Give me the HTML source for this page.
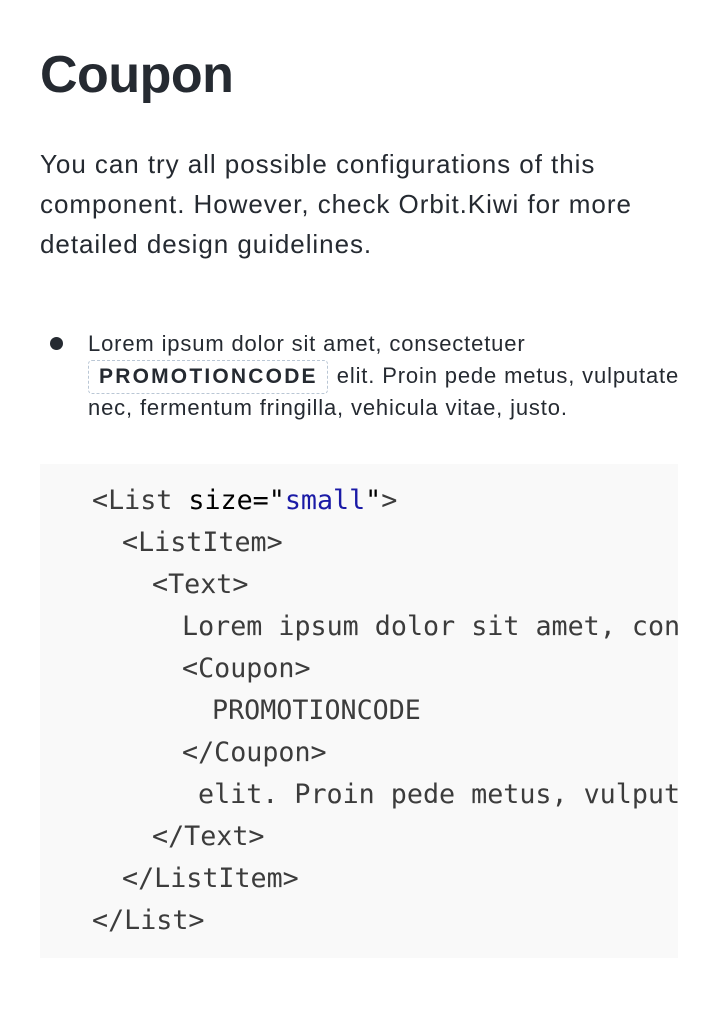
<!DOCTYPE html>
<html><head><style>
body{margin:0;background:#fff;width:718px;height:1026px;position:relative;font-family:"Liberation Sans",sans-serif;color:#252a31;overflow:hidden}
h1{position:absolute;left:40px;top:43px;margin:0;font-size:52px;font-weight:bold;line-height:64px;letter-spacing:-0.5px}
.p{position:absolute;left:40px;top:144px;width:660px;font-size:26px;line-height:40px;letter-spacing:0.95px}
.li{position:absolute;left:88px;top:328px;width:600px;font-size:22px;line-height:32px;letter-spacing:0.85px}
.dot{position:absolute;left:50px;top:337px;width:13px;height:13px;border-radius:50%;background:#252a31}
.cp{display:inline-block;border:1px dashed #bac7d5;border-radius:4px;padding:2px 9px 2px 10px;font-size:21px;font-weight:bold;letter-spacing:2.2px;line-height:28px;margin:-3px 2px -3px 0;vertical-align:baseline}
.code{position:absolute;left:40px;top:464px;width:638px;height:494px;background:#f9f9f9;overflow:hidden}
.code div{position:absolute;white-space:pre;font-family:"DejaVu Sans Mono",monospace;font-size:26.7px;line-height:42px;color:#3c3c3c}
</style></head><body>
<h1>Coupon</h1>
<div class="p">You can try all possible configurations of this component. However, check Orbit.Kiwi for more detailed design guidelines.</div>
<div class="dot"></div>
<div class="li">Lorem ipsum dolor sit amet, consectetuer <span class="cp">PROMOTIONCODE</span> elit. Proin pede metus, vulputate nec, fermentum fringilla, vehicula vitae, justo.</div>
<div class="code">
<div style="left:52px;top:16px">&lt;List <span style="color:#000">size=</span><span style="color:#000">"</span><span style="color:#1a1aa6">small</span><span style="color:#000">"</span>&gt;</div>
<div style="left:82px;top:58px">&lt;ListItem&gt;</div>
<div style="left:112px;top:100px">&lt;Text&gt;</div>
<div style="left:142px;top:142px">Lorem ipsum dolor sit amet, consectetuer</div>
<div style="left:142px;top:184px">&lt;Coupon&gt;</div>
<div style="left:172px;top:226px">PROMOTIONCODE</div>
<div style="left:142px;top:268px">&lt;/Coupon&gt;</div>
<div style="left:158px;top:310px">elit. Proin pede metus, vulputate</div>
<div style="left:112px;top:352px">&lt;/Text&gt;</div>
<div style="left:82px;top:394px">&lt;/ListItem&gt;</div>
<div style="left:52px;top:436px">&lt;/List&gt;</div>
</div>
</body></html>
